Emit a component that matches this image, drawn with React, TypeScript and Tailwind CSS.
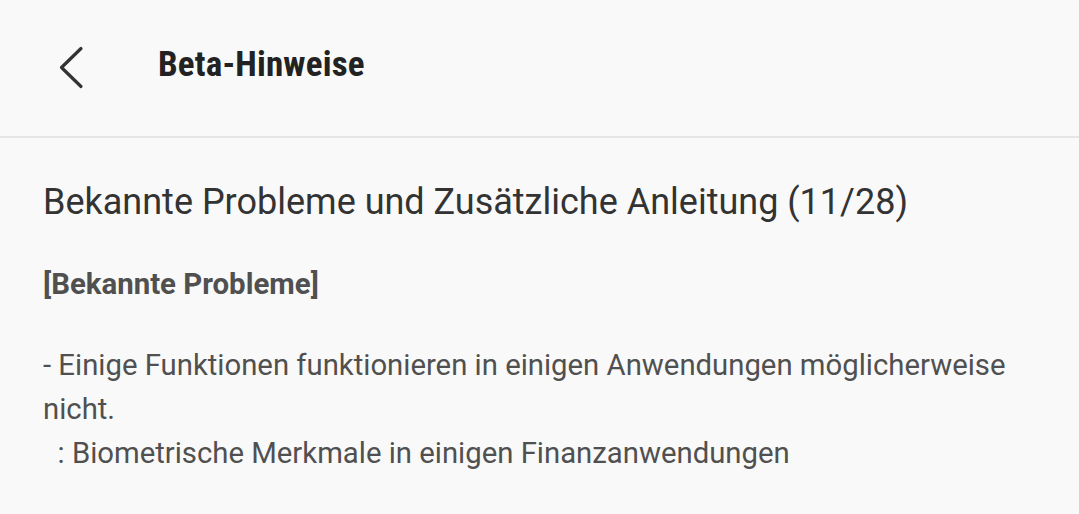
import React from "react";

export default function App() {
  return (
    <div className="w-[1079px] h-[514px] overflow-hidden bg-[#f9f9f9] font-['Roboto',sans-serif]">
      <header className="flex h-[136px] items-center">
        <div className="ml-[51px] flex h-[50px] w-[40px] items-center justify-center">
          <svg width="40" height="50" viewBox="0 0 40 50" fill="none">
            <path d="M30 5.5 L10.5 24.5 L30 43.5" stroke="#333" strokeWidth="3.2" strokeLinecap="round" strokeLinejoin="round" />
          </svg>
        </div>
        <h1 className="ml-[67px] mb-[6px] text-[35px] font-bold tracking-[0.2px] text-[#222] [font-stretch:condensed]">
          Beta-Hinweise
        </h1>
      </header>
      <div className="h-[2px] bg-[#e6e6e6]" />
      <main className="px-[43px] pt-[42px]">
        <h2 className="text-[36px] leading-[44px] text-[#333]">
          Bekannte Probleme und Zusätzliche Anleitung (11/28)
        </h2>
        <p className="mt-[38px] text-[29.4px] font-bold leading-[44px] text-[#505050]">[Bekannte Probleme]</p>
        <p className="mt-[37px] text-[29.3px] leading-[44px] text-[#505050]">
          - Einige Funktionen funktionieren in einigen Anwendungen möglicherweise nicht.
          <br />
          {"\u00a0\u00a0"}: Biometrische Merkmale in einigen Finanzanwendungen
        </p>
      </main>
    </div>
  );
}
